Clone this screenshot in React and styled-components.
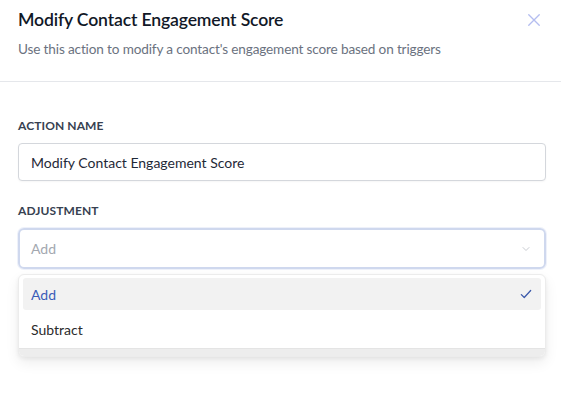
import React, { useState } from "react";
import styled, { createGlobalStyle } from "styled-components";

const GlobalStyle = createGlobalStyle`
  html, body {
    margin: 0;
    padding: 0;
    background: #ffffff;
  }
  body {
    font-family: Lato, "Noto Sans", sans-serif;
    color: #111827;
  }
`;

const Panel = styled.div`
  width: 561px;
  height: 416px;
  background: #fff;
  overflow: hidden;
`;

const Header = styled.div`
  display: flex;
  justify-content: space-between;
  align-items: flex-start;
  padding: 7px 18px 0 18px;
  height: 74px;
  border-bottom: 1px solid #e5e7eb;
`;

const Title = styled.h2`
  margin: 0;
  font-size: 17.6px;
  font-weight: 600;
  letter-spacing: -0.15px;
  line-height: 26px;
  color: #111827;
`;

const Subtitle = styled.p`
  margin: 6px 0 0 0;
  font-size: 13.6px;
  letter-spacing: -0.15px;
  line-height: 20px;
  color: #6b7280;
`;

const CloseButton = styled.button`
  border: none;
  background: none;
  padding: 0;
  margin-top: 4px;
  margin-right: 0;
  color: #b4bdf0;
  cursor: pointer;
  display: flex;
`;

const Body = styled.div`
  padding: 35px 15px 0 18px;
  display: flex;
  flex-direction: column;
`;

const Field = styled.div`
  display: flex;
  flex-direction: column;
  margin-bottom: ${(p) => p.$gap || 0}px;
`;

const Label = styled.label`
  font-size: 12px;
  font-weight: 700;
  letter-spacing: 0.1px;
  text-transform: uppercase;
  color: #374151;
  line-height: 18px;
  margin-bottom: 8px;
`;

const TextInput = styled.input`
  box-sizing: border-box;
  width: 100%;
  height: 38px;
  border: 1px solid #d4d7dc;
  border-radius: 4px;
  padding: 0 12px;
  font-family: inherit;
  font-size: 14px;
  color: #1f2937;
  outline: none;
  box-shadow: 0 1px 2px rgba(0, 0, 0, 0.04);
`;

const SelectWrap = styled.div`
  position: relative;
`;

const SelectBox = styled.div`
  box-sizing: border-box;
  height: 41px;
  border: 2px solid #cfd8ee;
  border-radius: 6px;
  padding: 0 12px 0 11px;
  display: flex;
  align-items: center;
  justify-content: space-between;
  font-size: 14px;
  color: #a3a8b0;
  box-shadow: 0 0 0 1px #eef1fa;
`;

const Menu = styled.ul`
  position: absolute;
  top: 46px;
  left: 0;
  right: 0;
  margin: 0;
  list-style: none;
  background: #fff;
  border: 1px solid #ececec;
  border-radius: 6px;
  padding: 3px 4px 0 4px;
  box-shadow: 0 6px 14px rgba(0, 0, 0, 0.07), 0 2px 4px rgba(0, 0, 0, 0.06);
  overflow: hidden;

  &::after {
    content: "";
    display: block;
    height: 7px;
    margin: 3px -4px 0 -4px;
    background: #ededed;
    border-top: 1px solid #e4e4e4;
  }
`;

const Option = styled.li`
  height: 32px;
  display: flex;
  align-items: center;
  justify-content: space-between;
  padding: 0 8px;
  border-radius: 3px;
  font-size: 14px;
  background: ${(p) => (p.$active ? "#f2f2f2" : "transparent")};
  color: ${(p) => (p.$active ? "#3b5cb8" : "#2b2b2b")};
  margin-bottom: ${(p) => (p.$active ? 3 : 0)}px;
`;

const Chevron = () => (
  <svg width="12" height="12" viewBox="0 0 24 24" fill="none" stroke="#c9ccd2" strokeWidth="2" strokeLinecap="round" strokeLinejoin="round">
    <path d="M6 9l6 6 6-6" />
  </svg>
);

const Check = () => (
  <svg width="14" height="14" viewBox="0 0 24 24" fill="none" stroke="#3d5bab" strokeWidth="2.2" strokeLinecap="round" strokeLinejoin="round">
    <path d="M4 13l5 5L20 6" />
  </svg>
);

const CloseIcon = () => (
  <svg width="18" height="18" viewBox="0 0 24 24" fill="none" stroke="currentColor" strokeWidth="1.8" strokeLinecap="round">
    <path d="M5 5l14 14M19 5L5 19" />
  </svg>
);

export default function App() {
  const [name, setName] = useState("Modify Contact Engagement Score");
  const options = ["Add", "Subtract"];
  const selected = "Add";

  return (
    <>
      <GlobalStyle />
      <Panel>
        <Header>
          <div>
            <Title>Modify Contact Engagement Score</Title>
            <Subtitle>Use this action to modify a contact's engagement score based on triggers</Subtitle>
          </div>
          <CloseButton aria-label="Close">
            <CloseIcon />
          </CloseButton>
        </Header>
        <Body>
          <Field $gap={21}>
            <Label>Action Name</Label>
            <TextInput value={name} onChange={(e) => setName(e.target.value)} />
          </Field>
          <Field>
            <Label>Adjustment</Label>
            <SelectWrap>
              <SelectBox>
                <span>Add</span>
                <Chevron />
              </SelectBox>
              <Menu>
                {options.map((o) => (
                  <Option key={o} $active={o === selected}>
                    <span>{o}</span>
                    {o === selected && <Check />}
                  </Option>
                ))}
              </Menu>
            </SelectWrap>
          </Field>
        </Body>
      </Panel>
    </>
  );
}
